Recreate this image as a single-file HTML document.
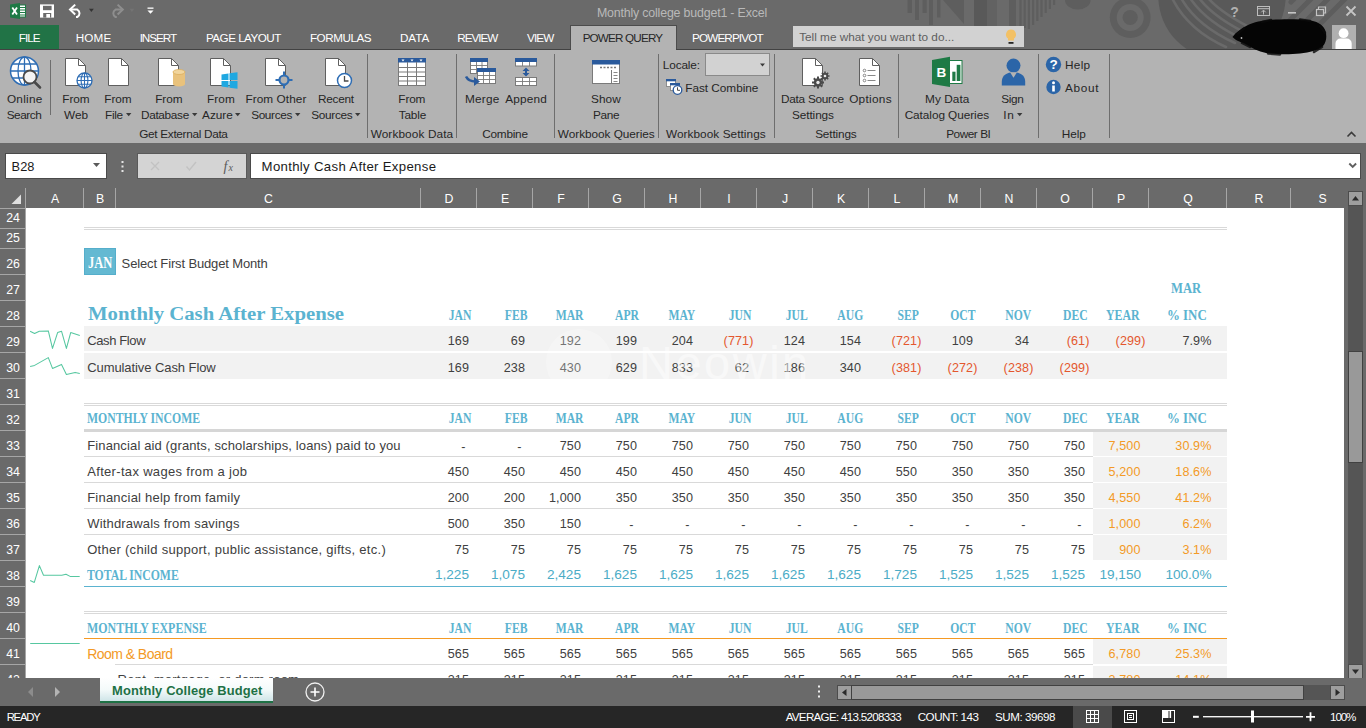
<!DOCTYPE html>
<html>
<head>
<meta charset="utf-8">
<title>Monthly college budget1 - Excel</title>
<style>
*{box-sizing:border-box;margin:0;padding:0}
html,body{width:1366px;height:728px;overflow:hidden;background:#6a6a6a;font-family:"Liberation Sans",sans-serif;}
#app{position:relative;width:1366px;height:728px;overflow:hidden;background:#6a6a6a}
.abs{position:absolute}
/* title + tabs */
#titlebar{position:absolute;left:0;top:0;width:1366px;height:49px;background:#6a6a6a}
#title{position:absolute;left:0;width:1366px;top:5px;text-align:center;color:#c8c8c8;font-size:12.5px;letter-spacing:-0.1px}
.tab{position:absolute;top:25px;height:24px;line-height:24px;color:#fff;font-size:12.3px;white-space:nowrap;letter-spacing:-0.35px}
#filetab{left:0;width:59px;background:#217346;text-align:center}
#pqtab{left:570px;width:107px;height:25px;background:#b3b3b3;border:1px solid #4c4c4c;border-bottom:none}
/* ribbon */
#ribbon{position:absolute;left:0;top:49px;width:1366px;height:94px;background:#b3b3b3;border-top:1px solid #424242}
.rl{position:absolute;font-size:12.3px;color:#262626;white-space:nowrap;text-align:center;line-height:16px;letter-spacing:-0.2px}
.gl{position:absolute;top:126px;font-size:12px;color:#262626;white-space:nowrap;text-align:center;letter-spacing:-0.1px}
.sep{position:absolute;top:54px;height:84px;width:1px;background:#6e6e6e}
/* formula bar */
#namebox{position:absolute;left:5px;top:153px;width:102px;height:26px;background:#fff;border:1px solid #4a4a4a}
#fxbox{position:absolute;left:137px;top:153px;width:110px;height:26px;background:#d4d4d4;border:1px solid #5a5a5a}
#formula{position:absolute;left:250px;top:153px;width:1111px;height:26px;background:#fff;border:1px solid #4a4a4a}
/* grid */
#colhdr{position:absolute;left:0;top:188px;width:1366px;height:20px;background:#6a6a6a}
.ch{position:absolute;top:192px;color:#fff;font-size:12.3px;text-align:center;line-height:15px}
.cs{position:absolute;top:188px;width:1px;height:20px;background:#a6a6a6}
#sheet{position:absolute;left:26px;top:208px;width:1318px;height:470px;background:#fff;overflow:hidden}
#rowhdr{position:absolute;left:0;top:208px;width:26px;height:470px;background:#6a6a6a;overflow:hidden}
.rh{position:absolute;left:0;width:26px;color:#fff;font-size:12.3px;text-align:center;border-bottom:1px solid #a6a6a6}
/* cells */
.c{position:absolute;white-space:nowrap;font-size:12.6px;color:#404040;letter-spacing:0.1px}
.t{position:absolute;white-space:nowrap}
.tt{font-size:13.6px;letter-spacing:0}
.sb{position:absolute;width:15px;height:15px;background:#9e9e9e;border:1px solid #4c4c4c}
.th{position:absolute;background:#999;border:1px solid #414141}
.n{text-align:right;width:56px}
.hd{font-family:"Liberation Serif",serif;font-weight:bold;color:#5bb3d0;font-size:13.6px;letter-spacing:0}
.or{color:#f39a26}
.rd{color:#e4572e}
.bl{color:#4bacc6}
.band{position:absolute;background:#f2f2f2}
.ln{position:absolute;height:1px;background:#d9d9d9}
/* bottom */
#tabbar{position:absolute;left:0;top:678px;width:1366px;height:28px;background:#6a6a6a}
#status{position:absolute;left:0;top:706px;width:1366px;height:22px;background:#262626;color:#fff;font-size:12px}
#vscroll{position:absolute;left:1348px;top:205px;width:15px;height:460px;background:#555}
</style>
</head>
<body>
<div id="app">
<div id="titlebar">
<!-- decorative background pattern -->
<svg class="abs" style="left:880px;top:0" width="486" height="49" viewBox="880 0 486 49">
 <g fill="#5e5e5e">
  <rect x="907.5" y="0" width="4.5" height="13"/><rect x="915" y="0" width="4" height="20"/><rect x="922.5" y="0" width="4.2" height="13"/><rect x="929" y="0" width="4" height="25"/><rect x="937" y="0" width="3.5" height="17.5"/>
  <path d="M943 0 H964 V24Z"/>
  <rect x="974" y="0" width="13" height="26" fill="#595959"/><rect x="987" y="0" width="10" height="26" fill="#626262"/><rect x="1009" y="0" width="7" height="26"/>
  <path d="M1065 0 a12.8 9.5 0 0 0 25.6 0z"/>
 </g>
 <g stroke="#5e5e5e" stroke-width="2.2">
  <path d="M1020.5 0V26M1024.7 0V28M1028.9 0V29M1033.1 0V25M1037.3 0V21M1041.5 0V17M1045.7 0V13M1049.9 0V9M1054.1 0V5"/>
 </g>
 <circle cx="1130.2" cy="17.5" r="20.4" fill="#5e5e5e"/><circle cx="1130.2" cy="17.5" r="13.5" fill="#6a6a6a"/><circle cx="1130.2" cy="17.5" r="7.6" fill="#5e5e5e"/>
 <circle cx="1222" cy="-4" r="63.7" fill="#595959"/>
 <g stroke="#6a6a6a" stroke-width="2.6" fill="none" stroke-linecap="round">
  <path d="M1172 -2 Q1188 30 1226 47"/><path d="M1181 -2 Q1197 26 1235 43"/><path d="M1190 -2 Q1206 22 1243 39"/><path d="M1199 -2 Q1214 18 1250 35"/><path d="M1208 -2 Q1222 14 1257 31"/>
 </g>
 <g stroke="#5d5d5d" stroke-width="5" fill="none" stroke-linecap="round"><path d="M1295 -2 l-4 4M1313 -3 l-27 27M1330 -3 l-27 27M1347 -3 l-27 27"/></g>
</svg>
<!-- QAT -->
<svg class="abs" style="left:0;top:0" width="170" height="25" viewBox="0 0 170 25">
 <!-- excel icon -->
 <path d="M10 4.5 L20 3 V19 L10 17.5Z" fill="#1e7a45"/>
 <rect x="19.5" y="5" width="6" height="12" fill="#fff" stroke="#1e7a45" stroke-width="1"/>
 <path d="M20 7.5h5M20 10h5M20 12.5h5M20 15h5" stroke="#1e7a45" stroke-width="1.1"/>
 <path d="M12.3 7.5 L17 14.5 M17 7.5 L12.3 14.5" stroke="#fff" stroke-width="1.8"/>
 <!-- save -->
 <rect x="40" y="4.4" width="14" height="13.2" fill="#fff"/>
 <rect x="43" y="5.8" width="8.6" height="4.4" fill="#6a6a6a"/>
 <rect x="43.2" y="13" width="8" height="4.6" fill="#6a6a6a"/>
 <rect x="46.3" y="14" width="3.7" height="3.6" fill="#fff"/>
 <!-- undo -->
 <path d="M70.3 9.6 H77.3 A4.2 4.2 0 0 1 77.3 17 H76" fill="none" stroke="#fff" stroke-width="2"/>
 <path d="M75.2 4.6 L70 9.6 L75.2 14.4" fill="none" stroke="#fff" stroke-width="2"/>
 <path d="M89 8.7 h4.8 l-2.4 3.4z" fill="#333"/>
 <!-- redo (disabled) -->
 <path d="M122.5 9.6 H115.5 A4.2 4.2 0 0 0 115.5 17 H116.8" fill="none" stroke="#8e8e8e" stroke-width="2"/>
 <path d="M117.6 4.6 L122.8 9.6 L117.6 14.4" fill="none" stroke="#8e8e8e" stroke-width="2"/>
 <path d="M129.5 8.7 h4.8 l-2.4 3.4z" fill="#737373"/>
 <!-- customize -->
 <rect x="147.5" y="7.5" width="6" height="1.3" fill="#fff"/>
 <path d="M147.5 10.5 h6 l-3 3.3z" fill="#fff"/>
</svg>
<!-- window buttons -->
<svg class="abs" style="left:1220px;top:0" width="146" height="25" viewBox="1220 0 146 25">
 <rect x="1257.5" y="6.5" width="12" height="9" fill="none" stroke="#bdbdbd" stroke-width="1"/><path d="M1257.5 8.7 h12" stroke="#bdbdbd" stroke-width="1"/>
 <path d="M1263.5 14.5 v-4 M1261.3 12.3 l2.2 -2.2 l2.2 2.2" fill="none" stroke="#bdbdbd" stroke-width="1"/>
 <rect x="1288" y="12" width="8" height="1.6" fill="#c4c4c4"/>
 <rect x="1316.5" y="9.5" width="7" height="6" fill="none" stroke="#c4c4c4" stroke-width="1.2"/>
 <path d="M1318.5 9.5 v-2.5 h7 v6 h-2" fill="none" stroke="#c4c4c4" stroke-width="1.2"/>
 <path d="M1346.5 6.5 l9 9 M1355.5 6.5 l-9 9" stroke="#c4c4c4" stroke-width="1.8"/>
</svg>
<!-- tabs -->
<div class="tab" id="filetab"></div>
<div class="tab" id="pqtab"></div>
<!-- tell me -->
<div class="abs" style="left:793px;top:26px;width:231px;height:21px;background:#d2d2d2"></div>
<svg class="abs" style="left:1002px;top:28px" width="18" height="19" viewBox="0 0 18 19">
 <path d="M9 1.5 a5 5 0 0 1 3 9 v2 h-6 v-2 a5 5 0 0 1 3 -9z" fill="#f3c166"/>
 <rect x="6.5" y="14" width="5" height="1.8" fill="#262626"/>
</svg>
<!-- redacted name scribble -->
<svg class="abs" style="left:1226px;top:12px;z-index:5" width="106" height="44" viewBox="1226 12 106 44">
 <path d="M1232.5 37 C1236 32 1241 29 1247 25.5 C1254 22 1262 20.5 1272 19.8 C1284 19 1300 19 1311 20.5 C1319 22 1324 26 1325.5 31 C1327 36 1326.5 42 1323 46 C1318 50.5 1310 52.5 1300 53.5 C1290 54.5 1276 54.5 1266 53 C1258 51.5 1252 48 1246 44.5 C1241 42 1236 41 1232.5 37Z" fill="#050505"/>
 <path d="M1238 33.5 l6 -5 M1262 22 l9 -2 M1300 19.5 l10 1.5 M1320 26 l5 7 M1322 47 l-8 5 M1280 54.5 l-12 -1 M1250 47 l-8 -4" stroke="#0a0a0a" stroke-width="2.5" stroke-linecap="round" opacity="0.8"/>
 <circle cx="1241.5" cy="38" r="0.9" fill="#bbb"/>
</svg>
<!-- avatar -->
<div class="abs" style="left:1332px;top:25px;width:24px;height:24px;background:#b0b0b0"></div>
<svg class="abs" style="left:1332px;top:25px" width="24" height="24" viewBox="0 0 24 24">
 <circle cx="11.6" cy="8.2" r="4.9" fill="#fff"/>
 <path d="M3.5 24 v-5.5 a5 5 0 0 1 5 -5 h6.2 a5 5 0 0 1 5 5 v5.5z" fill="#fff"/>
</svg>
<div class="t" style="left:1230.3px;top:3.6px;font-size:14px;line-height:16px;font-weight:bold;color:#b0b0b0">?</div>
<div class="t" style="left:596.93px;top:5.2px;font-size:12.4px;line-height:16px;color:#b9b9b9;letter-spacing:-0.18px;">Monthly college budget1 - Excel</div>
<div class="t" style="left:18.65px;top:29.55px;font-size:11.7px;line-height:16px;color:#fff;letter-spacing:-0.9px;">FILE</div>
<div class="t" style="left:75.65px;top:29.55px;font-size:11.7px;line-height:16px;color:#fff;letter-spacing:0.21px;">HOME</div>
<div class="t" style="left:139.65px;top:29.55px;font-size:11.7px;line-height:16px;color:#fff;letter-spacing:-1.05px;">INSERT</div>
<div class="t" style="left:205.95px;top:29.55px;font-size:11.7px;line-height:16px;color:#fff;letter-spacing:-0.53px;">PAGE LAYOUT</div>
<div class="t" style="left:309.95px;top:29.55px;font-size:11.7px;line-height:16px;color:#fff;letter-spacing:-0.46px;">FORMULAS</div>
<div class="t" style="left:399.95px;top:29.55px;font-size:11.7px;line-height:16px;color:#fff;letter-spacing:-0.01px;">DATA</div>
<div class="t" style="left:457.35px;top:29.55px;font-size:11.7px;line-height:16px;color:#fff;letter-spacing:-1.02px;">REVIEW</div>
<div class="t" style="left:526.95px;top:29.55px;font-size:11.7px;line-height:16px;color:#fff;letter-spacing:-0.82px;">VIEW</div>
<div class="t" style="left:692.05px;top:29.55px;font-size:11.7px;line-height:16px;color:#fff;letter-spacing:-0.86px;">POWERPIVOT</div>
<div class="t" style="left:582.65px;top:29.55px;font-size:11.7px;line-height:16px;color:#262626;letter-spacing:-0.83px;">POWER QUERY</div>
<div class="t" style="left:799.15px;top:29.21px;font-size:11.8px;line-height:16px;color:#5e5e5e;letter-spacing:-0.01px;">Tell me what you want to do...</div>
</div>

<div id="ribbon"></div><div class="abs" style="left:571px;top:49px;width:105px;height:1px;background:#b3b3b3"></div>
<svg class="abs" style="left:0;top:50px" width="1366" height="93" viewBox="0 50 1366 93">
<!-- Online search -->
<g transform="translate(24.5 71)"><circle r="14" fill="#fff" stroke="#2e6db4" stroke-width="1.5"/><ellipse rx="6.5" ry="14" fill="none" stroke="#2e6db4" stroke-width="1.3"/><path d="M-14 0H14M0 -14V14M-12 -7H12M-12 7H12" stroke="#2e6db4" stroke-width="1.3" fill="none"/></g>
<circle cx="30" cy="77" r="6.5" fill="#f4f4f4" stroke="#4a4a4a" stroke-width="1.8"/>
<path d="M34.5 82 L40 87.5" stroke="#4a4a4a" stroke-width="2.6" stroke-linecap="round"/>
<rect x="50" y="60" width="1" height="55" fill="#6e6e6e"/>
<!-- From Web -->
<g transform="translate(65 58)"><path d="M0.5 0.5 H13.5 L20.5 7.5 V27.5 H0.5Z" fill="#fff" stroke="#5f5f5f" stroke-width="1"/><path d="M13.5 0.5 V7.5 H20.5" fill="none" stroke="#5f5f5f" stroke-width="1"/></g><g transform="translate(84.5 80.5)"><circle r="7.5" fill="#fff" stroke="#2e6db4" stroke-width="1.3"/><ellipse rx="3.4" ry="7.5" fill="none" stroke="#2e6db4" stroke-width="1.1"/><path d="M-7.5 0H7.5M0 -7.5V7.5M-6.3 -3.8H6.3M-6.3 3.8H6.3" stroke="#2e6db4" stroke-width="1.1" fill="none"/></g>
<!-- From File -->
<g transform="translate(108 58)"><path d="M0.5 0.5 H13.5 L20.5 7.5 V27.5 H0.5Z" fill="#fff" stroke="#5f5f5f" stroke-width="1"/><path d="M13.5 0.5 V7.5 H20.5" fill="none" stroke="#5f5f5f" stroke-width="1"/></g>
<!-- From Database -->
<g transform="translate(158 58)"><path d="M0.5 0.5 H13.5 L20.5 7.5 V27.5 H0.5Z" fill="#fff" stroke="#5f5f5f" stroke-width="1"/><path d="M13.5 0.5 V7.5 H20.5" fill="none" stroke="#5f5f5f" stroke-width="1"/></g>
<path d="M173 72 v12 a6 2.5 0 0 0 12 0 v-12z" fill="#e9c27c"/><ellipse cx="179" cy="72" rx="6" ry="2.5" fill="#f1d59d" stroke="#dcae5e" stroke-width="0.8"/>
<!-- From Azure -->
<g transform="translate(210 58)"><path d="M0.5 0.5 H13.5 L20.5 7.5 V27.5 H0.5Z" fill="#fff" stroke="#5f5f5f" stroke-width="1"/><path d="M13.5 0.5 V7.5 H20.5" fill="none" stroke="#5f5f5f" stroke-width="1"/></g>
<path d="M221.5 74.5 L228.5 73.5 V80 H221.5Z M229.5 73.3 L237.5 72.2 V80 H229.5Z M221.5 81 H228.5 V87.5 L221.5 86.5Z M229.5 81 H237.5 V88.8 L229.5 87.7Z" fill="#1fa8e1"/>
<!-- From other sources -->
<g transform="translate(265 58)"><path d="M0.5 0.5 H13.5 L20.5 7.5 V27.5 H0.5Z" fill="#fff" stroke="#5f5f5f" stroke-width="1"/><path d="M13.5 0.5 V7.5 H20.5" fill="none" stroke="#5f5f5f" stroke-width="1"/></g>
<circle cx="284" cy="80" r="4.5" fill="#b3b3b3" stroke="#2e6db4" stroke-width="2.2"/><path d="M284 71.5V76M284 84V88.5M275.5 80H280M288 80H292.5" stroke="#2e6db4" stroke-width="2"/>
<!-- Recent sources -->
<g transform="translate(325 58)"><path d="M0.5 0.5 H13.5 L20.5 7.5 V27.5 H0.5Z" fill="#fff" stroke="#5f5f5f" stroke-width="1"/><path d="M13.5 0.5 V7.5 H20.5" fill="none" stroke="#5f5f5f" stroke-width="1"/></g>
<circle cx="344.5" cy="80.5" r="7" fill="#fff" stroke="#2e6db4" stroke-width="1.5"/><path d="M344.5 76V81H348.5" fill="none" stroke="#4a4a4a" stroke-width="1.3"/>
<!-- From Table -->
<g><rect x="398.5" y="58.5" width="27" height="27" fill="#fff" stroke="#7a7a7a"/><rect x="398" y="58" width="28" height="4.5" fill="#2a5a9c"/>
<path d="M398.5 67.5h27M398.5 72h27M398.5 76.5h27M398.5 81h27M407.5 62v23.5M416.5 62v23.5" stroke="#7a7a7a" stroke-width="1" fill="none"/>
<path d="M401.5 59.5h3l-1.5 2zM410.5 59.5h3l-1.5 2zM419.5 59.5h3l-1.5 2z" fill="#fff"/></g>
<!-- Merge -->
<g><rect x="470.5" y="58.5" width="17" height="15" fill="#fff" stroke="#7a7a7a"/><rect x="470" y="58" width="18" height="4" fill="#2a5a9c"/><path d="M470.5 65.5h17M470.5 69.5h17M476.5 62v11.5M482 62v11.5" stroke="#7a7a7a" stroke-width="0.9"/>
<rect x="477.5" y="68.5" width="18" height="15" fill="#fff" stroke="#7a7a7a"/><rect x="477" y="68" width="19" height="4" fill="#2a5a9c"/><path d="M477.5 75.5h18M477.5 79.5h18M483.5 72v11.5M489.5 72v11.5" stroke="#7a7a7a" stroke-width="0.9"/>
<path d="M466 76.5 c2 4 5 5 9.5 5" fill="none" stroke="#2a5a9c" stroke-width="2.6"/><path d="M474 77 l6 4.5 l-6 4.5z" fill="#2a5a9c"/></g>
<!-- Append -->
<g><rect x="515.5" y="58.5" width="21" height="7.5" fill="#fff" stroke="#7a7a7a"/><rect x="515" y="58" width="22" height="4" fill="#2a5a9c"/><path d="M522.5 62v4M529.5 62v4" stroke="#7a7a7a" stroke-width="0.9"/>
<rect x="515.5" y="77.5" width="21" height="8" fill="#fff" stroke="#7a7a7a"/><path d="M515.5 81.5h21M522.5 77.5v8M529.5 77.5v8" stroke="#7a7a7a" stroke-width="0.9"/>
<path d="M526 67.5 l3.5 3.5 h-7z M526 76.5 l3.5 -3.5 h-7z" fill="#2a5a9c"/><rect x="525" y="70" width="2" height="4" fill="#2a5a9c"/></g>
<!-- Show Pane -->
<g><rect x="592.5" y="60.5" width="27" height="23" fill="#fff" stroke="#7a7a7a"/><rect x="592" y="60" width="28" height="4.5" fill="#2a5a9c"/>
<path d="M600 67.5h2M603.5 67.5h2M607 67.5h2M610.5 67.5h2M614 67.5h2" stroke="#7a7a7a" stroke-width="1.4"/><path d="M611.5 70v13.5" stroke="#7a7a7a" stroke-width="1"/><path d="M613.5 72.5h4M613.5 75.5h4M613.5 78.5h4M613.5 81.5h4" stroke="#7a7a7a" stroke-width="0.9"/></g>
<!-- Locale dropdown -->
<rect x="705.5" y="53.5" width="64" height="22" fill="#d2d2d2" stroke="#8a8a8a"/>
<path d="M760 63.5h5l-2.5 3z" fill="#3a3a3a"/>
<!-- Fast combine icon -->
<g><rect x="666.5" y="79.5" width="9" height="7" fill="#fff" stroke="#7a7a7a" stroke-width="0.8"/><rect x="666" y="79" width="10" height="2.3" fill="#2a5a9c"/>
<rect x="670.5" y="83.5" width="9" height="7" fill="#fff" stroke="#7a7a7a" stroke-width="0.8"/><rect x="670" y="83" width="10" height="2.3" fill="#2a5a9c"/>
<circle cx="677.5" cy="90" r="4.3" fill="#fff" stroke="#2a5a9c" stroke-width="1.3"/><path d="M677.5 87.3V90.3H680" fill="none" stroke="#4a4a4a" stroke-width="1"/></g>
<!-- Data Source Settings -->
<g transform="translate(802 58)"><path d="M0.5 0.5 H13.5 L20.5 7.5 V27.5 H0.5Z" fill="#fff" stroke="#5f5f5f" stroke-width="1"/><path d="M13.5 0.5 V7.5 H20.5" fill="none" stroke="#5f5f5f" stroke-width="1"/></g>
<g fill="#4a4a4a"><circle cx="818" cy="82.5" r="4.2"/><circle cx="825" cy="76" r="3.2"/></g>
<g stroke="#4a4a4a" stroke-width="2" fill="none"><path d="M818 76.5v12M812 82.5h12M813.8 78.3l8.4 8.4M822.2 78.3l-8.4 8.4"/></g>
<g stroke="#4a4a4a" stroke-width="1.6" fill="none"><path d="M825 71.5v9M820.5 76h9M821.8 72.8l6.4 6.4M828.2 72.8l-6.4 6.4"/></g>
<circle cx="818" cy="82.5" r="1.7" fill="#e8e8e8"/><circle cx="825" cy="76" r="1.3" fill="#e8e8e8"/>
<!-- Options -->
<g transform="translate(859 58)"><path d="M0.5 0.5 H13.5 L20.5 7.5 V27.5 H0.5Z" fill="#fff" stroke="#5f5f5f" stroke-width="1"/><path d="M13.5 0.5 V7.5 H20.5" fill="none" stroke="#5f5f5f" stroke-width="1"/></g>
<g fill="none" stroke="#7a7a7a" stroke-width="0.9"><circle cx="864.5" cy="70.5" r="1.3"/><circle cx="864.5" cy="75.5" r="1.3"/><circle cx="864.5" cy="80.5" r="1.3"/><path d="M867.5 70.5h8M867.5 75.5h8M867.5 80.5h8"/></g>
<!-- My Data Catalog -->
<g><rect x="948" y="60.5" width="14" height="23" fill="#fff" stroke="#1e7a45" stroke-width="1"/>
<rect x="952.3" y="71.7" width="3.2" height="9.3" fill="#1e7a45"/><rect x="956.7" y="64.8" width="3.7" height="16.2" fill="#1e7a45"/>
<path d="M932 60 L950 56.8 V87 L932 84Z" fill="#1e7a45"/>
<text x="936.5" y="77.3" font-family="Liberation Sans" font-weight="bold" font-size="13.5" fill="#fff">B</text></g>
<!-- Sign In -->
<circle cx="1013.5" cy="65.6" r="7" fill="#2b65a8"/>
<path d="M1001.8 85.5 v-4 c0 -5 4 -8.5 9 -9 h5.4 c5 0.5 9 4 9 9 v4z" fill="#2b65a8"/>
<path d="M1010 72.3 h7 l-3.5 5.5z" fill="#b3b3b3"/>
<!-- Help / About -->
<circle cx="1053.5" cy="64.5" r="7.7" fill="#2b65a8"/><text x="1049.6" y="69.4" font-family="Liberation Sans" font-weight="bold" font-size="13.5" fill="#fff">?</text>
<circle cx="1053.5" cy="87" r="7.2" fill="#2b65a8"/><rect x="1052.2" y="85.5" width="2.6" height="6" fill="#fff"/><circle cx="1053.5" cy="82.8" r="1.5" fill="#fff"/>
<!-- collapse chevron -->
<path d="M1347.5 136.5 l4 -4 l4 4" fill="none" stroke="#3a3a3a" stroke-width="1.6"/>
</svg>
<div class="sep" style="left:367px"></div><div class="sep" style="left:456px"></div><div class="sep" style="left:554px"></div><div class="sep" style="left:658px"></div><div class="sep" style="left:774px"></div><div class="sep" style="left:898px"></div><div class="sep" style="left:1038px"></div><div class="sep" style="left:1109px"></div>
<div class="t" style="left:6.95px;top:90.71px;font-size:11.8px;line-height:16px;color:#262626;letter-spacing:0.26px;">Online</div>
<div class="t" style="left:6.65px;top:107.21px;font-size:11.8px;line-height:16px;color:#262626;letter-spacing:-0.46px;">Search</div>
<div class="t" style="left:62.35px;top:90.71px;font-size:11.8px;line-height:16px;color:#262626;letter-spacing:-0.07px;">From</div>
<div class="t" style="left:64.05px;top:107.21px;font-size:11.8px;line-height:16px;color:#262626;letter-spacing:-0.07px;">Web</div>
<div class="t" style="left:104.35px;top:90.71px;font-size:11.8px;line-height:16px;color:#262626;letter-spacing:-0.07px;">From</div>
<div class="t" style="left:105.05px;top:107.21px;font-size:11.8px;line-height:16px;color:#262626;letter-spacing:-0.34px;">File</div>
<svg class="abs" style="left:125.7px;top:113px" width="6" height="4"><path d="M0 0h5.4l-2.7 3.2z" fill="#3a3a3a"/></svg>
<div class="t" style="left:155.15px;top:90.71px;font-size:11.8px;line-height:16px;color:#262626;letter-spacing:-0.01px;">From</div>
<div class="t" style="left:140.95px;top:107.21px;font-size:11.8px;line-height:16px;color:#262626;letter-spacing:-0.31px;">Database</div>
<svg class="abs" style="left:192px;top:113px" width="6" height="4"><path d="M0 0h5.4l-2.7 3.2z" fill="#3a3a3a"/></svg>
<div class="t" style="left:206.95px;top:90.71px;font-size:11.8px;line-height:16px;color:#262626;letter-spacing:0.09px;">From</div>
<div class="t" style="left:202.05px;top:107.21px;font-size:11.8px;line-height:16px;color:#262626;letter-spacing:-0.01px;">Azure</div>
<svg class="abs" style="left:235px;top:113px" width="6" height="4"><path d="M0 0h5.4l-2.7 3.2z" fill="#3a3a3a"/></svg>
<div class="t" style="left:245.45px;top:90.71px;font-size:11.8px;line-height:16px;color:#262626;letter-spacing:0.07px;">From Other</div>
<div class="t" style="left:251.15px;top:107.21px;font-size:11.8px;line-height:16px;color:#262626;letter-spacing:-0.35px;">Sources</div>
<svg class="abs" style="left:295px;top:113px" width="6" height="4"><path d="M0 0h5.4l-2.7 3.2z" fill="#3a3a3a"/></svg>
<div class="t" style="left:318.05px;top:90.71px;font-size:11.8px;line-height:16px;color:#262626;letter-spacing:-0.28px;">Recent</div>
<div class="t" style="left:311.25px;top:107.21px;font-size:11.8px;line-height:16px;color:#262626;letter-spacing:-0.31px;">Sources</div>
<svg class="abs" style="left:355px;top:113px" width="6" height="4"><path d="M0 0h5.4l-2.7 3.2z" fill="#3a3a3a"/></svg>
<div class="t" style="left:398.35px;top:90.71px;font-size:11.8px;line-height:16px;color:#262626;letter-spacing:-0.14px;">From</div>
<div class="t" style="left:398.65px;top:107.21px;font-size:11.8px;line-height:16px;color:#262626;letter-spacing:-0.15px;">Table</div>
<div class="t" style="left:465.05px;top:90.71px;font-size:11.8px;line-height:16px;color:#262626;letter-spacing:0.19px;">Merge</div>
<div class="t" style="left:505.15px;top:90.71px;font-size:11.8px;line-height:16px;color:#262626;letter-spacing:0.22px;">Append</div>
<div class="t" style="left:591.05px;top:90.71px;font-size:11.8px;line-height:16px;color:#262626;letter-spacing:0.06px;">Show</div>
<div class="t" style="left:592.95px;top:107.21px;font-size:11.8px;line-height:16px;color:#262626;letter-spacing:-0.35px;">Pane</div>
<div class="t" style="left:662.85px;top:56.91px;font-size:11.8px;line-height:16px;color:#262626;letter-spacing:-0.16px;">Locale:</div>
<div class="t" style="left:685.25px;top:79.71px;font-size:11.8px;line-height:16px;color:#262626;letter-spacing:-0.03px;">Fast Combine</div>
<div class="t" style="left:780.95px;top:90.71px;font-size:11.8px;line-height:16px;color:#262626;letter-spacing:-0.25px;">Data Source</div>
<div class="t" style="left:791.95px;top:107.21px;font-size:11.8px;line-height:16px;color:#262626;letter-spacing:-0.08px;">Settings</div>
<div class="t" style="left:849.15px;top:90.71px;font-size:11.8px;line-height:16px;color:#262626;letter-spacing:0.29px;">Options</div>
<div class="t" style="left:925.05px;top:90.71px;font-size:11.8px;line-height:16px;color:#262626;letter-spacing:0.06px;">My Data</div>
<div class="t" style="left:904.65px;top:107.21px;font-size:11.8px;line-height:16px;color:#262626;letter-spacing:-0.06px;">Catalog Queries</div>
<div class="t" style="left:1001.15px;top:90.71px;font-size:11.8px;line-height:16px;color:#262626;letter-spacing:-0.31px;">Sign</div>
<div class="t" style="left:1003.15px;top:107.21px;font-size:11.8px;line-height:16px;color:#262626;letter-spacing:0.86px;">In</div>
<svg class="abs" style="left:1016.6px;top:113px" width="6" height="4"><path d="M0 0h5.4l-2.7 3.2z" fill="#3a3a3a"/></svg>
<div class="t" style="left:1064.95px;top:56.91px;font-size:11.8px;line-height:16px;color:#262626;letter-spacing:0.31px;">Help</div>
<div class="t" style="left:1064.95px;top:79.71px;font-size:11.8px;line-height:16px;color:#262626;letter-spacing:0.72px;">About</div>
<div class="t" style="left:139.25px;top:125.91px;font-size:11.8px;line-height:16px;color:#262626;letter-spacing:-0.32px;">Get External Data</div>
<div class="t" style="left:370.65px;top:125.91px;font-size:11.8px;line-height:16px;color:#262626;letter-spacing:0.12px;">Workbook Data</div>
<div class="t" style="left:482.25px;top:125.91px;font-size:11.8px;line-height:16px;color:#262626;letter-spacing:-0.25px;">Combine</div>
<div class="t" style="left:557.85px;top:125.91px;font-size:11.8px;line-height:16px;color:#262626;letter-spacing:-0.04px;">Workbook Queries</div>
<div class="t" style="left:665.95px;top:125.91px;font-size:11.8px;line-height:16px;color:#262626;letter-spacing:0.06px;">Workbook Settings</div>
<div class="t" style="left:815.15px;top:125.91px;font-size:11.8px;line-height:16px;color:#262626;letter-spacing:-0.15px;">Settings</div>
<div class="t" style="left:946.15px;top:125.91px;font-size:11.8px;line-height:16px;color:#262626;letter-spacing:-0.45px;">Power BI</div>
<div class="t" style="left:1061.65px;top:125.91px;font-size:11.8px;line-height:16px;color:#262626;letter-spacing:0.01px;">Help</div>

<div id="namebox"></div>
<div class="t" style="left:11.62px;top:159px;font-size:12.8px;line-height:16px;color:#1a1a1a;letter-spacing:-0.01px;">B28</div>
<svg class="abs" style="left:92px;top:162px" width="10" height="6"><path d="M1 1h7l-3.5 4z" fill="#5a5a5a"/></svg>
<svg class="abs" style="left:119.5px;top:159px" width="6" height="16"><rect x="1.5" y="2" width="2" height="2" fill="#e6e6e6"/><rect x="1.5" y="6.5" width="2" height="2" fill="#e6e6e6"/><rect x="1.5" y="11" width="2" height="2" fill="#e6e6e6"/></svg>
<div id="fxbox"></div>
<svg class="abs" style="left:137px;top:153px" width="110" height="25" viewBox="137 153 110 25"><path d="M151 162 l8 8 M159 162 l-8 8" stroke="#c2c2c2" stroke-width="1.3"/><path d="M186.5 166.5 l3 3.5 l6.5 -8" fill="none" stroke="#c2c2c2" stroke-width="1.4"/><text x="223.5" y="171" font-family="Liberation Serif" font-style="italic" font-size="14" fill="#5a5a5a">f</text><text x="228.5" y="171" font-family="Liberation Serif" font-style="italic" font-size="10" fill="#5a5a5a">x</text></svg>
<div id="formula"></div>
<div class="t" style="left:261.6px;top:159px;font-size:13.2px;line-height:16px;color:#1a1a1a;letter-spacing:0.32px;">Monthly Cash After Expense</div>
<svg class="abs" style="left:1347px;top:161px" width="12" height="10"><path d="M2.3 2.5 l3.4 3.5 l3.4 -3.5" fill="none" stroke="#606060" stroke-width="1.9"/></svg>
<div id="colhdr"></div>
<svg class="abs" style="left:10px;top:193px" width="14" height="13"><path d="M11 1.5 V11 H1.5Z" fill="#e0e0e0"/></svg>
<div class="cs" style="left:25px"></div>
<div class="ch" style="left:26px;width:58px">A</div>
<div class="cs" style="left:83px"></div>
<div class="ch" style="left:84px;width:32px">B</div>
<div class="cs" style="left:115px"></div>
<div class="ch" style="left:116px;width:305px">C</div>
<div class="cs" style="left:420px"></div>
<div class="ch" style="left:421px;width:56px">D</div>
<div class="cs" style="left:476px"></div>
<div class="ch" style="left:477px;width:56px">E</div>
<div class="cs" style="left:532px"></div>
<div class="ch" style="left:533px;width:56px">F</div>
<div class="cs" style="left:588px"></div>
<div class="ch" style="left:589px;width:56px">G</div>
<div class="cs" style="left:644px"></div>
<div class="ch" style="left:645px;width:56px">H</div>
<div class="cs" style="left:700px"></div>
<div class="ch" style="left:701px;width:56px">I</div>
<div class="cs" style="left:756px"></div>
<div class="ch" style="left:757px;width:56px">J</div>
<div class="cs" style="left:812px"></div>
<div class="ch" style="left:813px;width:56px">K</div>
<div class="cs" style="left:868px"></div>
<div class="ch" style="left:869px;width:56px">L</div>
<div class="cs" style="left:924px"></div>
<div class="ch" style="left:925px;width:56px">M</div>
<div class="cs" style="left:980px"></div>
<div class="ch" style="left:981px;width:56px">N</div>
<div class="cs" style="left:1036px"></div>
<div class="ch" style="left:1037px;width:56px">O</div>
<div class="cs" style="left:1092px"></div>
<div class="ch" style="left:1093px;width:56px">P</div>
<div class="cs" style="left:1148px"></div>
<div class="ch" style="left:1149px;width:78px">Q</div>
<div class="cs" style="left:1226px"></div>
<div class="ch" style="left:1227px;width:64px">R</div>
<div class="cs" style="left:1290px"></div>
<div class="ch" style="left:1291px;width:63px">S</div>
<div id="rowhdr"><div class="abs" style="left:0;top:0;width:26px;height:1px;background:#a6a6a6"></div>
<div class="rh" style="top:1px;height:20px;line-height:19.5px">24</div>
<div class="rh" style="top:21px;height:20px;line-height:19.5px">25</div>
<div class="rh" style="top:41px;height:26px;line-height:31.5px">26</div>
<div class="rh" style="top:67px;height:26px;line-height:31.5px">27</div>
<div class="rh" style="top:93px;height:26px;line-height:31.5px">28</div>
<div class="rh" style="top:119px;height:26px;line-height:31.5px">29</div>
<div class="rh" style="top:145px;height:26px;line-height:31.5px">30</div>
<div class="rh" style="top:171px;height:26px;line-height:31.5px">31</div>
<div class="rh" style="top:197px;height:26px;line-height:31.5px">32</div>
<div class="rh" style="top:223px;height:26px;line-height:31.5px">33</div>
<div class="rh" style="top:249px;height:26px;line-height:31.5px">34</div>
<div class="rh" style="top:275px;height:26px;line-height:31.5px">35</div>
<div class="rh" style="top:301px;height:26px;line-height:31.5px">36</div>
<div class="rh" style="top:327px;height:26px;line-height:31.5px">37</div>
<div class="rh" style="top:353px;height:26px;line-height:31.5px">38</div>
<div class="rh" style="top:379px;height:26px;line-height:31.5px">39</div>
<div class="rh" style="top:405px;height:26px;line-height:31.5px">40</div>
<div class="rh" style="top:431px;height:26px;line-height:31.5px">41</div>
<div class="rh" style="top:457px;height:26px;line-height:31.5px">42</div>
</div>
<div class="abs" style="left:25px;top:208px;width:1px;height:470px;background:#a6a6a6"></div>
<div id="sheet">
<div class="ln" style="left:58px;top:19px;width:1143px;height:1px;background:#d9d9d9"></div>
<div class="ln" style="left:58px;top:21px;width:1143px;height:1px;background:#d9d9d9"></div>
<div class="ln" style="left:58px;top:195px;width:1143px;height:1px;background:#d9d9d9"></div>
<div class="ln" style="left:58px;top:197px;width:1143px;height:1px;background:#d9d9d9"></div>
<div class="ln" style="left:58px;top:403px;width:1143px;height:1px;background:#d9d9d9"></div>
<div class="ln" style="left:58px;top:405px;width:1143px;height:1px;background:#d9d9d9"></div>
<div class="abs" style="left:58px;top:40px;width:32px;height:27px;background:#64b9d2;border:1px solid #55aecb"></div>
<div class="c hd" style="left:61.88px;top:41.5px;height:26px;line-height:26px;font-size:16px;color:#fff;transform:scaleX(0.784);transform-origin:0 50%">JAN</div>
<div class="c " style="left:95.61px;top:42px;height:27px;line-height:27px;font-size:13px;letter-spacing:-0.14px">Select First Budget Month</div>
<div class="c hd" style="left:1145.23px;top:67.7px;height:26px;line-height:26px;font-size:13.6px;transform:scaleX(0.930);transform-origin:0 50%">MAR</div>
<div class="c hd" style="left:62.44px;top:93px;height:26px;line-height:26px;font-size:17.9px;transform:scaleX(1.159);transform-origin:0 50%">Monthly Cash After Expense</div>
<div class="c hd" style="right:872.73px;top:94.7px;height:26px;line-height:26px;font-size:13.6px;transform:scaleX(0.857);transform-origin:100% 50%">JAN</div>
<div class="c hd" style="right:816.73px;top:94.7px;height:26px;line-height:26px;font-size:13.6px;transform:scaleX(0.857);transform-origin:100% 50%">FEB</div>
<div class="c hd" style="right:760.73px;top:94.7px;height:26px;line-height:26px;font-size:13.6px;transform:scaleX(0.857);transform-origin:100% 50%">MAR</div>
<div class="c hd" style="right:704.73px;top:94.7px;height:26px;line-height:26px;font-size:13.6px;transform:scaleX(0.857);transform-origin:100% 50%">APR</div>
<div class="c hd" style="right:648.73px;top:94.7px;height:26px;line-height:26px;font-size:13.6px;transform:scaleX(0.857);transform-origin:100% 50%">MAY</div>
<div class="c hd" style="right:592.73px;top:94.7px;height:26px;line-height:26px;font-size:13.6px;transform:scaleX(0.857);transform-origin:100% 50%">JUN</div>
<div class="c hd" style="right:536.73px;top:94.7px;height:26px;line-height:26px;font-size:13.6px;transform:scaleX(0.857);transform-origin:100% 50%">JUL</div>
<div class="c hd" style="right:480.73px;top:94.7px;height:26px;line-height:26px;font-size:13.6px;transform:scaleX(0.857);transform-origin:100% 50%">AUG</div>
<div class="c hd" style="right:424.73px;top:94.7px;height:26px;line-height:26px;font-size:13.6px;transform:scaleX(0.857);transform-origin:100% 50%">SEP</div>
<div class="c hd" style="right:368.73px;top:94.7px;height:26px;line-height:26px;font-size:13.6px;transform:scaleX(0.857);transform-origin:100% 50%">OCT</div>
<div class="c hd" style="right:312.73px;top:94.7px;height:26px;line-height:26px;font-size:13.6px;transform:scaleX(0.857);transform-origin:100% 50%">NOV</div>
<div class="c hd" style="right:256.73px;top:94.7px;height:26px;line-height:26px;font-size:13.6px;transform:scaleX(0.857);transform-origin:100% 50%">DEC</div>
<div class="c hd" style="left:1080.23px;top:94.5px;height:26px;line-height:26px;font-size:13.6px;transform:scaleX(0.874);transform-origin:0 50%">YEAR</div>
<div class="c hd" style="left:1140.73px;top:94.5px;height:26px;line-height:26px;font-size:13.6px;transform:scaleX(0.947);transform-origin:0 50%">% INC</div>
<div class="band" style="left:58px;top:118px;width:1143px;height:25px;background:#f2f2f2"></div>
<div class="band" style="left:58px;top:145px;width:1143px;height:26px;background:#f2f2f2"></div>
<div class="c " style="left:61.21px;top:120px;height:26px;line-height:26px;font-size:13px;letter-spacing:-0.38px">Cash Flow</div>
<div class="c " style="right:875px;top:120px;height:26px;line-height:26px;">169</div>
<div class="c " style="right:819px;top:120px;height:26px;line-height:26px;">69</div>
<div class="c " style="right:763px;top:120px;height:26px;line-height:26px;">192</div>
<div class="c " style="right:707px;top:120px;height:26px;line-height:26px;">199</div>
<div class="c " style="right:651px;top:120px;height:26px;line-height:26px;">204</div>
<div class="c rd" style="right:590.5px;top:120px;height:26px;line-height:26px;">(771)</div>
<div class="c " style="right:539px;top:120px;height:26px;line-height:26px;">124</div>
<div class="c " style="right:483px;top:120px;height:26px;line-height:26px;">154</div>
<div class="c rd" style="right:422.5px;top:120px;height:26px;line-height:26px;">(721)</div>
<div class="c " style="right:371px;top:120px;height:26px;line-height:26px;">109</div>
<div class="c " style="right:315px;top:120px;height:26px;line-height:26px;">34</div>
<div class="c rd" style="right:254.5px;top:120px;height:26px;line-height:26px;">(61)</div>
<div class="c rd" style="right:198.5px;top:120px;height:26px;line-height:26px;">(299)</div>
<div class="c " style="right:132.5px;top:120px;height:26px;line-height:26px;">7.9%</div>
<div class="c " style="left:61.21px;top:147px;height:26px;line-height:26px;font-size:13px;letter-spacing:-0.08px">Cumulative Cash Flow</div>
<div class="c " style="right:875px;top:147px;height:26px;line-height:26px;">169</div>
<div class="c " style="right:819px;top:147px;height:26px;line-height:26px;">238</div>
<div class="c " style="right:763px;top:147px;height:26px;line-height:26px;">430</div>
<div class="c " style="right:707px;top:147px;height:26px;line-height:26px;">629</div>
<div class="c " style="right:651px;top:147px;height:26px;line-height:26px;">833</div>
<div class="c " style="right:595px;top:147px;height:26px;line-height:26px;">62</div>
<div class="c " style="right:539px;top:147px;height:26px;line-height:26px;">186</div>
<div class="c " style="right:483px;top:147px;height:26px;line-height:26px;">340</div>
<div class="c rd" style="right:422.5px;top:147px;height:26px;line-height:26px;">(381)</div>
<div class="c rd" style="right:366.5px;top:147px;height:26px;line-height:26px;">(272)</div>
<div class="c rd" style="right:310.5px;top:147px;height:26px;line-height:26px;">(238)</div>
<div class="c rd" style="right:254.5px;top:147px;height:26px;line-height:26px;">(299)</div>
<div class="c hd" style="left:61.33px;top:198px;height:26px;line-height:26px;font-size:13.6px;transform:scaleX(0.865);transform-origin:0 50%">MONTHLY INCOME</div>
<div class="c hd" style="right:872.73px;top:198.2px;height:26px;line-height:26px;font-size:13.6px;transform:scaleX(0.857);transform-origin:100% 50%">JAN</div>
<div class="c hd" style="right:816.73px;top:198.2px;height:26px;line-height:26px;font-size:13.6px;transform:scaleX(0.857);transform-origin:100% 50%">FEB</div>
<div class="c hd" style="right:760.73px;top:198.2px;height:26px;line-height:26px;font-size:13.6px;transform:scaleX(0.857);transform-origin:100% 50%">MAR</div>
<div class="c hd" style="right:704.73px;top:198.2px;height:26px;line-height:26px;font-size:13.6px;transform:scaleX(0.857);transform-origin:100% 50%">APR</div>
<div class="c hd" style="right:648.73px;top:198.2px;height:26px;line-height:26px;font-size:13.6px;transform:scaleX(0.857);transform-origin:100% 50%">MAY</div>
<div class="c hd" style="right:592.73px;top:198.2px;height:26px;line-height:26px;font-size:13.6px;transform:scaleX(0.857);transform-origin:100% 50%">JUN</div>
<div class="c hd" style="right:536.73px;top:198.2px;height:26px;line-height:26px;font-size:13.6px;transform:scaleX(0.857);transform-origin:100% 50%">JUL</div>
<div class="c hd" style="right:480.73px;top:198.2px;height:26px;line-height:26px;font-size:13.6px;transform:scaleX(0.857);transform-origin:100% 50%">AUG</div>
<div class="c hd" style="right:424.73px;top:198.2px;height:26px;line-height:26px;font-size:13.6px;transform:scaleX(0.857);transform-origin:100% 50%">SEP</div>
<div class="c hd" style="right:368.73px;top:198.2px;height:26px;line-height:26px;font-size:13.6px;transform:scaleX(0.857);transform-origin:100% 50%">OCT</div>
<div class="c hd" style="right:312.73px;top:198.2px;height:26px;line-height:26px;font-size:13.6px;transform:scaleX(0.857);transform-origin:100% 50%">NOV</div>
<div class="c hd" style="right:256.73px;top:198.2px;height:26px;line-height:26px;font-size:13.6px;transform:scaleX(0.857);transform-origin:100% 50%">DEC</div>
<div class="c hd" style="left:1080.23px;top:198px;height:26px;line-height:26px;font-size:13.6px;transform:scaleX(0.874);transform-origin:0 50%">YEAR</div>
<div class="c hd" style="left:1140.73px;top:198px;height:26px;line-height:26px;font-size:13.6px;transform:scaleX(0.947);transform-origin:0 50%">% INC</div>
<div class="ln" style="left:58px;top:221px;width:1143px;height:3px;background:#d6d6d6"></div>
<div class="band" style="left:1067px;top:224px;width:134px;height:24px;background:#f2f2f2"></div>
<div class="c " style="left:61.21px;top:225px;height:26px;line-height:26px;font-size:13px;letter-spacing:0.13px">Financial aid (grants, scholarships, loans) paid to you</div>
<div class="c " style="right:878.5px;top:226px;height:26px;line-height:26px;">-</div>
<div class="c " style="right:822.5px;top:226px;height:26px;line-height:26px;">-</div>
<div class="c " style="right:763px;top:225px;height:26px;line-height:26px;">750</div>
<div class="c " style="right:707px;top:225px;height:26px;line-height:26px;">750</div>
<div class="c " style="right:651px;top:225px;height:26px;line-height:26px;">750</div>
<div class="c " style="right:595px;top:225px;height:26px;line-height:26px;">750</div>
<div class="c " style="right:539px;top:225px;height:26px;line-height:26px;">750</div>
<div class="c " style="right:483px;top:225px;height:26px;line-height:26px;">750</div>
<div class="c " style="right:427px;top:225px;height:26px;line-height:26px;">750</div>
<div class="c " style="right:371px;top:225px;height:26px;line-height:26px;">750</div>
<div class="c " style="right:315px;top:225px;height:26px;line-height:26px;">750</div>
<div class="c " style="right:259px;top:225px;height:26px;line-height:26px;">750</div>
<div class="c or" style="right:203.5px;top:225px;height:26px;line-height:26px;">7,500</div>
<div class="c or" style="right:132.5px;top:225px;height:26px;line-height:26px;">30.9%</div>
<div class="ln" style="left:58px;top:248px;width:1009px;height:1px;background:#d9d9d9"></div>
<div class="band" style="left:1067px;top:249px;width:134px;height:25px;background:#f2f2f2"></div>
<div class="c " style="left:61.21px;top:251px;height:26px;line-height:26px;font-size:13px;letter-spacing:0.32px">After-tax wages from a job</div>
<div class="c " style="right:875px;top:251px;height:26px;line-height:26px;">450</div>
<div class="c " style="right:819px;top:251px;height:26px;line-height:26px;">450</div>
<div class="c " style="right:763px;top:251px;height:26px;line-height:26px;">450</div>
<div class="c " style="right:707px;top:251px;height:26px;line-height:26px;">450</div>
<div class="c " style="right:651px;top:251px;height:26px;line-height:26px;">450</div>
<div class="c " style="right:595px;top:251px;height:26px;line-height:26px;">450</div>
<div class="c " style="right:539px;top:251px;height:26px;line-height:26px;">450</div>
<div class="c " style="right:483px;top:251px;height:26px;line-height:26px;">450</div>
<div class="c " style="right:427px;top:251px;height:26px;line-height:26px;">550</div>
<div class="c " style="right:371px;top:251px;height:26px;line-height:26px;">350</div>
<div class="c " style="right:315px;top:251px;height:26px;line-height:26px;">350</div>
<div class="c " style="right:259px;top:251px;height:26px;line-height:26px;">350</div>
<div class="c or" style="right:203.5px;top:251px;height:26px;line-height:26px;">5,200</div>
<div class="c or" style="right:132.5px;top:251px;height:26px;line-height:26px;">18.6%</div>
<div class="ln" style="left:58px;top:274px;width:1009px;height:1px;background:#d9d9d9"></div>
<div class="band" style="left:1067px;top:275px;width:134px;height:25px;background:#f2f2f2"></div>
<div class="c " style="left:61.21px;top:277px;height:26px;line-height:26px;font-size:13px;letter-spacing:0.22px">Financial help from family</div>
<div class="c " style="right:875px;top:277px;height:26px;line-height:26px;">200</div>
<div class="c " style="right:819px;top:277px;height:26px;line-height:26px;">200</div>
<div class="c " style="right:763px;top:277px;height:26px;line-height:26px;">1,000</div>
<div class="c " style="right:707px;top:277px;height:26px;line-height:26px;">350</div>
<div class="c " style="right:651px;top:277px;height:26px;line-height:26px;">350</div>
<div class="c " style="right:595px;top:277px;height:26px;line-height:26px;">350</div>
<div class="c " style="right:539px;top:277px;height:26px;line-height:26px;">350</div>
<div class="c " style="right:483px;top:277px;height:26px;line-height:26px;">350</div>
<div class="c " style="right:427px;top:277px;height:26px;line-height:26px;">350</div>
<div class="c " style="right:371px;top:277px;height:26px;line-height:26px;">350</div>
<div class="c " style="right:315px;top:277px;height:26px;line-height:26px;">350</div>
<div class="c " style="right:259px;top:277px;height:26px;line-height:26px;">350</div>
<div class="c or" style="right:203.5px;top:277px;height:26px;line-height:26px;">4,550</div>
<div class="c or" style="right:132.5px;top:277px;height:26px;line-height:26px;">41.2%</div>
<div class="ln" style="left:58px;top:300px;width:1009px;height:1px;background:#d9d9d9"></div>
<div class="band" style="left:1067px;top:301px;width:134px;height:25px;background:#f2f2f2"></div>
<div class="c " style="left:61.21px;top:303px;height:26px;line-height:26px;font-size:13px;letter-spacing:0.18px">Withdrawals from savings</div>
<div class="c " style="right:875px;top:303px;height:26px;line-height:26px;">500</div>
<div class="c " style="right:819px;top:303px;height:26px;line-height:26px;">350</div>
<div class="c " style="right:763px;top:303px;height:26px;line-height:26px;">150</div>
<div class="c " style="right:710.5px;top:304px;height:26px;line-height:26px;">-</div>
<div class="c " style="right:654.5px;top:304px;height:26px;line-height:26px;">-</div>
<div class="c " style="right:598.5px;top:304px;height:26px;line-height:26px;">-</div>
<div class="c " style="right:542.5px;top:304px;height:26px;line-height:26px;">-</div>
<div class="c " style="right:486.5px;top:304px;height:26px;line-height:26px;">-</div>
<div class="c " style="right:430.5px;top:304px;height:26px;line-height:26px;">-</div>
<div class="c " style="right:374.5px;top:304px;height:26px;line-height:26px;">-</div>
<div class="c " style="right:318.5px;top:304px;height:26px;line-height:26px;">-</div>
<div class="c " style="right:262.5px;top:304px;height:26px;line-height:26px;">-</div>
<div class="c or" style="right:203.5px;top:303px;height:26px;line-height:26px;">1,000</div>
<div class="c or" style="right:132.5px;top:303px;height:26px;line-height:26px;">6.2%</div>
<div class="ln" style="left:58px;top:326px;width:1009px;height:1px;background:#d9d9d9"></div>
<div class="band" style="left:1067px;top:327px;width:134px;height:25px;background:#f2f2f2"></div>
<div class="c " style="left:61.21px;top:329px;height:26px;line-height:26px;font-size:13px;letter-spacing:0.28px">Other (child support, public assistance, gifts, etc.)</div>
<div class="c " style="right:875px;top:329px;height:26px;line-height:26px;">75</div>
<div class="c " style="right:819px;top:329px;height:26px;line-height:26px;">75</div>
<div class="c " style="right:763px;top:329px;height:26px;line-height:26px;">75</div>
<div class="c " style="right:707px;top:329px;height:26px;line-height:26px;">75</div>
<div class="c " style="right:651px;top:329px;height:26px;line-height:26px;">75</div>
<div class="c " style="right:595px;top:329px;height:26px;line-height:26px;">75</div>
<div class="c " style="right:539px;top:329px;height:26px;line-height:26px;">75</div>
<div class="c " style="right:483px;top:329px;height:26px;line-height:26px;">75</div>
<div class="c " style="right:427px;top:329px;height:26px;line-height:26px;">75</div>
<div class="c " style="right:371px;top:329px;height:26px;line-height:26px;">75</div>
<div class="c " style="right:315px;top:329px;height:26px;line-height:26px;">75</div>
<div class="c " style="right:259px;top:329px;height:26px;line-height:26px;">75</div>
<div class="c or" style="right:203.5px;top:329px;height:26px;line-height:26px;">900</div>
<div class="c or" style="right:132.5px;top:329px;height:26px;line-height:26px;">3.1%</div>
<div class="c hd" style="left:61.33px;top:355px;height:26px;line-height:26px;font-size:13.6px;transform:scaleX(0.862);transform-origin:0 50%">TOTAL INCOME</div>
<div class="c bl tt" style="right:875px;top:354px;height:26px;line-height:26px;">1,225</div>
<div class="c bl tt" style="right:819px;top:354px;height:26px;line-height:26px;">1,075</div>
<div class="c bl tt" style="right:763px;top:354px;height:26px;line-height:26px;">2,425</div>
<div class="c bl tt" style="right:707px;top:354px;height:26px;line-height:26px;">1,625</div>
<div class="c bl tt" style="right:651px;top:354px;height:26px;line-height:26px;">1,625</div>
<div class="c bl tt" style="right:595px;top:354px;height:26px;line-height:26px;">1,625</div>
<div class="c bl tt" style="right:539px;top:354px;height:26px;line-height:26px;">1,625</div>
<div class="c bl tt" style="right:483px;top:354px;height:26px;line-height:26px;">1,625</div>
<div class="c bl tt" style="right:427px;top:354px;height:26px;line-height:26px;">1,725</div>
<div class="c bl tt" style="right:371px;top:354px;height:26px;line-height:26px;">1,525</div>
<div class="c bl tt" style="right:315px;top:354px;height:26px;line-height:26px;">1,525</div>
<div class="c bl tt" style="right:259px;top:354px;height:26px;line-height:26px;">1,525</div>
<div class="c bl tt" style="right:203px;top:354px;height:26px;line-height:26px;">19,150</div>
<div class="c bl tt" style="right:132.5px;top:354px;height:26px;line-height:26px;">100.0%</div>
<div class="ln" style="left:58px;top:378px;width:1143px;height:1px;background:#5bb3d0"></div>
<div class="c hd" style="left:61.33px;top:407.5px;height:26px;line-height:26px;font-size:13.6px;transform:scaleX(0.879);transform-origin:0 50%">MONTHLY EXPENSE</div>
<div class="c hd" style="right:872.73px;top:407.7px;height:26px;line-height:26px;font-size:13.6px;transform:scaleX(0.857);transform-origin:100% 50%">JAN</div>
<div class="c hd" style="right:816.73px;top:407.7px;height:26px;line-height:26px;font-size:13.6px;transform:scaleX(0.857);transform-origin:100% 50%">FEB</div>
<div class="c hd" style="right:760.73px;top:407.7px;height:26px;line-height:26px;font-size:13.6px;transform:scaleX(0.857);transform-origin:100% 50%">MAR</div>
<div class="c hd" style="right:704.73px;top:407.7px;height:26px;line-height:26px;font-size:13.6px;transform:scaleX(0.857);transform-origin:100% 50%">APR</div>
<div class="c hd" style="right:648.73px;top:407.7px;height:26px;line-height:26px;font-size:13.6px;transform:scaleX(0.857);transform-origin:100% 50%">MAY</div>
<div class="c hd" style="right:592.73px;top:407.7px;height:26px;line-height:26px;font-size:13.6px;transform:scaleX(0.857);transform-origin:100% 50%">JUN</div>
<div class="c hd" style="right:536.73px;top:407.7px;height:26px;line-height:26px;font-size:13.6px;transform:scaleX(0.857);transform-origin:100% 50%">JUL</div>
<div class="c hd" style="right:480.73px;top:407.7px;height:26px;line-height:26px;font-size:13.6px;transform:scaleX(0.857);transform-origin:100% 50%">AUG</div>
<div class="c hd" style="right:424.73px;top:407.7px;height:26px;line-height:26px;font-size:13.6px;transform:scaleX(0.857);transform-origin:100% 50%">SEP</div>
<div class="c hd" style="right:368.73px;top:407.7px;height:26px;line-height:26px;font-size:13.6px;transform:scaleX(0.857);transform-origin:100% 50%">OCT</div>
<div class="c hd" style="right:312.73px;top:407.7px;height:26px;line-height:26px;font-size:13.6px;transform:scaleX(0.857);transform-origin:100% 50%">NOV</div>
<div class="c hd" style="right:256.73px;top:407.7px;height:26px;line-height:26px;font-size:13.6px;transform:scaleX(0.857);transform-origin:100% 50%">DEC</div>
<div class="c hd" style="left:1080.23px;top:407.5px;height:26px;line-height:26px;font-size:13.6px;transform:scaleX(0.874);transform-origin:0 50%">YEAR</div>
<div class="c hd" style="left:1140.73px;top:407.5px;height:26px;line-height:26px;font-size:13.6px;transform:scaleX(0.947);transform-origin:0 50%">% INC</div>
<div class="ln" style="left:58px;top:430px;width:1143px;height:1px;background:#f59a23"></div>
<div class="band" style="left:1067px;top:431px;width:134px;height:25px;background:#f2f2f2"></div>
<div class="c or" style="left:61.18px;top:433px;height:26px;line-height:26px;font-size:14px;letter-spacing:-0.54px">Room &amp; Board</div>
<div class="c " style="right:875px;top:433px;height:26px;line-height:26px;">565</div>
<div class="c " style="right:819px;top:433px;height:26px;line-height:26px;">565</div>
<div class="c " style="right:763px;top:433px;height:26px;line-height:26px;">565</div>
<div class="c " style="right:707px;top:433px;height:26px;line-height:26px;">565</div>
<div class="c " style="right:651px;top:433px;height:26px;line-height:26px;">565</div>
<div class="c " style="right:595px;top:433px;height:26px;line-height:26px;">565</div>
<div class="c " style="right:539px;top:433px;height:26px;line-height:26px;">565</div>
<div class="c " style="right:483px;top:433px;height:26px;line-height:26px;">565</div>
<div class="c " style="right:427px;top:433px;height:26px;line-height:26px;">565</div>
<div class="c " style="right:371px;top:433px;height:26px;line-height:26px;">565</div>
<div class="c " style="right:315px;top:433px;height:26px;line-height:26px;">565</div>
<div class="c " style="right:259px;top:433px;height:26px;line-height:26px;">565</div>
<div class="c or" style="right:203.5px;top:433px;height:26px;line-height:26px;">6,780</div>
<div class="c or" style="right:132.5px;top:433px;height:26px;line-height:26px;">25.3%</div>
<div class="ln" style="left:89px;top:456px;width:978px;height:1px;background:#d9d9d9"></div>
<div class="band" style="left:1067px;top:458px;width:134px;height:25px;background:#f2f2f2"></div>
<div class="c " style="left:91.61px;top:458.7px;height:26px;line-height:26px;font-size:13px;letter-spacing:0.24px">Rent, mortgage, or dorm room</div>
<div class="c " style="right:875px;top:458.7px;height:26px;line-height:26px;">315</div>
<div class="c " style="right:819px;top:458.7px;height:26px;line-height:26px;">315</div>
<div class="c " style="right:763px;top:458.7px;height:26px;line-height:26px;">315</div>
<div class="c " style="right:707px;top:458.7px;height:26px;line-height:26px;">315</div>
<div class="c " style="right:651px;top:458.7px;height:26px;line-height:26px;">315</div>
<div class="c " style="right:595px;top:458.7px;height:26px;line-height:26px;">315</div>
<div class="c " style="right:539px;top:458.7px;height:26px;line-height:26px;">315</div>
<div class="c " style="right:483px;top:458.7px;height:26px;line-height:26px;">315</div>
<div class="c " style="right:427px;top:458.7px;height:26px;line-height:26px;">315</div>
<div class="c " style="right:371px;top:458.7px;height:26px;line-height:26px;">315</div>
<div class="c " style="right:315px;top:458.7px;height:26px;line-height:26px;">315</div>
<div class="c " style="right:259px;top:458.7px;height:26px;line-height:26px;">315</div>
<div class="c or" style="right:203.5px;top:458.7px;height:26px;line-height:26px;">3,780</div>
<div class="c or" style="right:132.5px;top:458.7px;height:26px;line-height:26px;">14.1%</div>
<svg class="abs" style="left:514px;top:118px" width="300" height="53" viewBox="540 326 300 53"><g fill="#fff" opacity="0.5"><circle cx="579" cy="362" r="33" opacity="0.55"/><text x="639" y="379" font-family="Liberation Sans,sans-serif" font-size="47" letter-spacing="2.5">Neowin</text></g></svg>
<svg class="abs" style="left:0;top:0" width="60" height="470" viewBox="26 208 60 470"><g fill="none" stroke="#56c7a0" stroke-width="1.05" stroke-linejoin="round">
<path d="M30.1 331.2 L34.6 333.5 L39.3 331.2 L48.3 330.9 L52.5 348.4 L57.6 332.6 L61.5 331.2 L66.4 348.4 L70.7 332.6 L79.8 335.6"/>
<path d="M30.1 366.5 L34.6 365.4 L48.3 357.6 L52.5 368.4 L61.5 364.4 L66.4 374.4 L75.1 372.4 L79.8 373.5"/>
<path d="M30.2 580.5 L34.3 582.4 L39.4 565.6 L43.5 575.3 L61.8 575.3 L66 574.2 L70.1 576.4 L79.7 576.4"/>
<path d="M30.2 643.5 H79.7"/>
</g></svg>
</div>
<div id="vscroll"></div>
<div class="sb" style="left:1348px;top:191px"></div><svg class="abs" style="left:1348px;top:191px" width="15" height="15"><path d="M4 9.5 h7 l-3.5 -4.5z" fill="#2a2a2a"/></svg>
<div class="sb" style="left:1348px;top:664px"></div><svg class="abs" style="left:1348px;top:664px" width="15" height="15"><path d="M4 5.5 h7 l-3.5 4.5z" fill="#2a2a2a"/></svg>
<div class="th" style="left:1348px;top:351px;width:15px;height:112px"></div>
<div id="tabbar"></div>
<svg class="abs" style="left:20px;top:684px" width="50" height="16"><path d="M13 3 v10 l-5 -5z" fill="#8c8c8c"/><path d="M35 3 v10 l5 -5z" fill="#b4b4b4"/></svg>
<div class="abs" style="left:100px;top:678px;width:173px;height:25px;background:linear-gradient(#ffffff 0%,#f4fafa 50%,#cfe5e8 100%);border-bottom:2px solid #1e7145"></div>
<svg class="abs" style="left:304px;top:681px" width="22" height="22"><circle cx="11" cy="11" r="9" fill="none" stroke="#f0f0f0" stroke-width="1.3"/><path d="M6.5 11h9M11 6.5v9" stroke="#fff" stroke-width="1.6"/></svg>
<svg class="abs" style="left:816px;top:684px" width="6" height="16"><rect x="2" y="1.5" width="2" height="2" fill="#f0f0f0"/><rect x="2" y="6.5" width="2" height="2" fill="#f0f0f0"/><rect x="2" y="11.5" width="2" height="2" fill="#f0f0f0"/></svg>
<!-- hscroll -->
<div class="abs" style="left:837px;top:685px;width:508px;height:15px;background:#555"></div>
<div class="sb" style="left:837px;top:685px"></div><svg class="abs" style="left:837px;top:685px" width="15" height="15"><path d="M9.5 4 v7 l-4.5 -3.5z" fill="#2a2a2a"/></svg>
<div class="sb" style="left:1330px;top:685px"></div><svg class="abs" style="left:1330px;top:685px" width="15" height="15"><path d="M5.5 4 v7 l4.5 -3.5z" fill="#2a2a2a"/></svg>
<div class="th" style="left:851px;top:685px;width:453px;height:15px"></div>
<!-- status -->
<div id="status"></div>
<div class="abs" style="left:1073px;top:706px;width:39px;height:22px;background:#4a4a4a"></div>
<svg class="abs" style="left:1073px;top:706px" width="293" height="22" viewBox="1073 706 293 22">
 <g fill="none" stroke="#fff" stroke-width="1"><rect x="1086.5" y="710.5" width="12" height="12"/><path d="M1086.5 714.5h12M1086.5 718.5h12M1090.5 710.5v12M1094.5 710.5v12"/></g>
 <g fill="none" stroke="#fff" stroke-width="1"><rect x="1124.5" y="710.5" width="12" height="12"/><rect x="1127.5" y="713.5" width="6" height="6"/><path d="M1129 715.5h3M1129 717.5h3"/></g>
 <g><rect x="1162.5" y="710.5" width="12" height="12" fill="none" stroke="#fff" stroke-width="1"/><rect x="1163" y="711" width="5.5" height="7" fill="#fff"/><rect x="1169.5" y="711" width="1.6" height="7" fill="#fff"/></g>
 <rect x="1193" y="715.8" width="5.8" height="2" fill="#fff"/>
 <rect x="1203" y="716" width="100" height="1.4" fill="#f4f4f4"/>
 <rect x="1251" y="710.5" width="3" height="12" fill="#fff"/>
 <path d="M1306 716.8h9M1310.5 712.3v9" stroke="#fff" stroke-width="1.8"/>
</svg>
<div class="t" style="left:112.11px;top:682.83px;font-size:12.9px;line-height:16px;color:#1e7145;letter-spacing:0.13px;font-weight:bold;">Monthly College Budget</div>
<div class="t" style="left:6.66px;top:709.08px;font-size:11.3px;line-height:16px;color:#fff;letter-spacing:-1.19px;">READY</div>
<div class="t" style="left:785.65px;top:708.98px;font-size:11.6px;line-height:16px;color:#fff;letter-spacing:-0.7px;">AVERAGE: 413.5208333</div>
<div class="t" style="left:917.75px;top:708.98px;font-size:11.6px;line-height:16px;color:#fff;letter-spacing:-0.5px;">COUNT: 143</div>
<div class="t" style="left:995.05px;top:708.98px;font-size:11.6px;line-height:16px;color:#fff;letter-spacing:-0.46px;">SUM: 39698</div>
<div class="t" style="left:1330.05px;top:708.98px;font-size:11.6px;line-height:16px;color:#fff;letter-spacing:-1.09px;">100%</div>

</div>
</body>
</html>
